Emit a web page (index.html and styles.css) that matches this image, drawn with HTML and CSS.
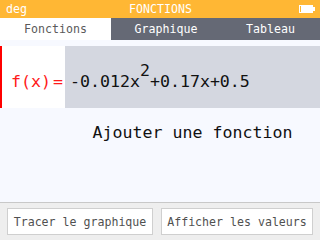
FILE: index.html
```html
<!DOCTYPE html>
<html>
<head>
<meta charset="utf-8">
<link rel="stylesheet" href="styles.css">
</head>
<body>
<div class="screen">
  <div class="header">
    <span class="hdr-left">deg</span>
    <span class="hdr-title">FONCTIONS</span>
    <span class="hdr-right">
      <svg class="battery" width="16" height="8" viewBox="0 0 16 8">
        <rect x="0" y="0" width="14" height="8" fill="#fff"/>
        <rect x="1" y="1" width="1" height="6" fill="#FFB734"/>
        <rect x="14" y="2" width="2" height="4" fill="#fff"/>
      </svg>
    </span>
  </div>
  <div class="tabs">
    <div class="tab active">Fonctions</div>
    <div class="tab">Graphique</div>
    <div class="tab">Tableau</div>
  </div>
  <div class="content">
    <div class="func-row">
      <div class="indicator"></div>
      <div class="func-name"><span>f(x)</span><span class="eq">=</span></div>
      <div class="func-expr">-0.012x<span class="exp">2</span>+0.17x+0.5</div>
    </div>
    <div class="add-row">Ajouter une fonction</div>
  </div>
  <div class="buttons">
    <div class="btn">Tracer le graphique</div>
    <div class="btn">Afficher les valeurs</div>
  </div>
</div>
</body>
</html>
```
FILE: styles.css
```css
* { box-sizing: border-box; }
html, body { margin: 0; padding: 0; }
body {
  width: 320px;
  height: 240px;
  overflow: hidden;
  background: #F7F9FF;
  font-family: "DejaVu Sans Mono", monospace;
}
.screen {
  display: flex;
  flex-direction: column;
  height: 240px;
}
.header {
  height: 18px;
  background: #FFB734;
  color: #fff;
  font-size: 11.6px;
  display: grid;
  grid-template-columns: 1fr auto 1fr;
  align-items: center;
  padding: 0 5px 0 6px;
  line-height: 18px;
}
.hdr-title { text-align: center; }
.hdr-right { display: flex; justify-content: flex-end; }
.battery { display: block; }
.tabs {
  height: 22px;
  display: grid;
  grid-template-columns: 111px 110px 1fr;
  background: #656975;
  font-size: 11.6px;
}
.tab {
  display: flex;
  align-items: center;
  justify-content: center;
  color: #fff;
}
.tab.active {
  background: #fff;
  color: #5a5a5a;
}
.content {
  flex: 1;
  padding-top: 6px;
}
.func-row {
  display: flex;
  height: 62px;
}
.indicator {
  width: 2px;
  background: #FF0000;
}
.func-name {
  width: 63px;
  background: #fff;
  color: #FF1A1A;
  font-size: 16.6px;
  display: flex;
  align-items: center;
  justify-content: flex-end;
  padding-right: 2px;
  padding-top: 9px;
}
.func-name .eq { margin-left: 2px; }
.func-expr {
  flex: 1;
  background: #D4D7E0;
  color: #111;
  font-size: 16.6px;
  display: flex;
  align-items: center;
  padding-left: 5px;
  padding-top: 9px;
  white-space: pre;
}
.exp {
  position: relative;
  top: -11px;
}
.add-row {
  height: 48px;
  margin-left: 65px;
  display: flex;
  align-items: center;
  justify-content: center;
  font-size: 16.6px;
  color: #111;
}
.buttons {
  height: 38px;
  border-top: 1px solid #C8C8C8;
  background: #EEEEEE;
  display: grid;
  grid-template-columns: 146px 152px;
  column-gap: 8px;
  padding: 5px 8px 5px 7px;
}
.btn {
  background: #fff;
  border: 1px solid #CFCFCF;
  color: #505050;
  font-size: 11.6px;
  display: flex;
  align-items: center;
  justify-content: center;
}
```
